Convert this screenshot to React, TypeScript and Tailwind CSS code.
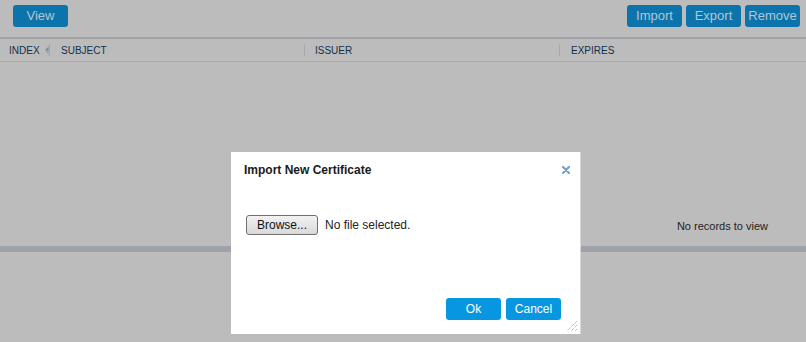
import React from "react";

export default function App() {
  const font = { fontFamily: '"Liberation Sans", Arial, sans-serif' };
  return (
    <div className="relative w-[806px] h-[342px] overflow-hidden bg-[#bcbcbc]" style={font}>
      {/* toolbar */}
      <div className="h-[37px] flex items-start pt-[5px] px-[13px]">
        <button className="w-[55px] h-[22px] rounded-[3px] bg-[#0c74aa] text-[#b3c6d4] text-[13px] leading-[22px]">View</button>
        <div className="flex-1" />
        <div className="flex gap-[4px] -mr-[7px]">
          <button className="w-[55px] h-[22px] rounded-[3px] bg-[#0c74aa] text-[#b3c6d4] text-[13px] leading-[22px]">Import</button>
          <button className="w-[55px] h-[22px] rounded-[3px] bg-[#0c74aa] text-[#b3c6d4] text-[13px] leading-[22px]">Export</button>
          <button className="w-[55px] h-[22px] rounded-[3px] bg-[#0c74aa] text-[#b3c6d4] text-[13px] leading-[22px]">Remove</button>
        </div>
      </div>
      <div className="h-[2px] bg-[#9fa3a7]" />
      {/* header */}
      <div className="h-[22px] flex items-center text-[10px] text-[#12304a] border-b border-[#a9a9a9] box-content">
        <div className="w-[49px] pl-[9px] flex items-center">
          <span>INDEX</span>
          <svg width="5" height="9" viewBox="0 0 5 9" className="ml-[5px]">
            <polygon points="4,0 4,4.5 0,4.5" fill="#5f90b4" />
            <polygon points="0,4.5 4,4.5 4,9" fill="#9aa0a6" />
          </svg>
        </div>
        <div className="w-px h-[12px] bg-[#a8a8a8]" />
        <div className="w-[254px] pl-[11px]">SUBJECT</div>
        <div className="w-px h-[12px] bg-[#a8a8a8]" />
        <div className="w-[254px] pl-[10px]">ISSUER</div>
        <div className="w-px h-[12px] bg-[#a8a8a8]" />
        <div className="pl-[11px]">EXPIRES</div>
      </div>
      {/* body */}
      <div className="h-[184px] flex items-end justify-end pr-[38px] pb-[12px]">
        <span className="text-[11px] text-[#1e1e1e]">No records to view</span>
      </div>
      <div className="h-[6px] bg-[#9fa3a9]" />

      {/* modal */}
      <div className="absolute left-[231px] top-[152px] w-[350px] h-[182px] bg-white border-r border-[#d8d8d8] flex flex-col">
        <div className="flex items-center justify-between h-[35px] pl-[13px] pr-[10px] pt-[1px]">
          <span className="text-[12px] font-bold text-[#1a1a1a]">Import New Certificate</span>
          <svg width="8" height="8" viewBox="0 0 8 8">
            <path d="M1 1 L7 7 M7 1 L1 7" stroke="#74a2ca" strokeWidth="2.2" strokeLinecap="round" />
          </svg>
        </div>
        <div className="flex items-center pl-[15px] mt-[28px]">
          <button className="w-[72px] h-[20px] rounded-[3px] border border-[#707070] bg-gradient-to-b from-[#f2f2f2] to-[#d9d9d9] text-[12px] text-[#111] leading-[18px]">Browse...</button>
          <span className="ml-[7px] text-[12px] text-[#222]">No file selected.</span>
        </div>
        <div className="flex-1" />
        <div className="flex justify-end gap-[5px] pr-[19px] pb-[14px]">
          <button className="w-[55px] h-[22px] rounded-[3px] bg-[#0797e1] text-white text-[12px] leading-[22px]">Ok</button>
          <button className="w-[55px] h-[22px] rounded-[3px] bg-[#0797e1] text-white text-[12px] leading-[22px]">Cancel</button>
        </div>
        <svg width="12" height="12" viewBox="0 0 12 12" className="absolute right-[2px] bottom-[2px]">
          <path d="M11 1 L1 11 M11 5 L5 11 M11 9 L9 11" stroke="#7aa6d6" strokeWidth="1" strokeDasharray="1 1" />
        </svg>
      </div>
    </div>
  );
}
